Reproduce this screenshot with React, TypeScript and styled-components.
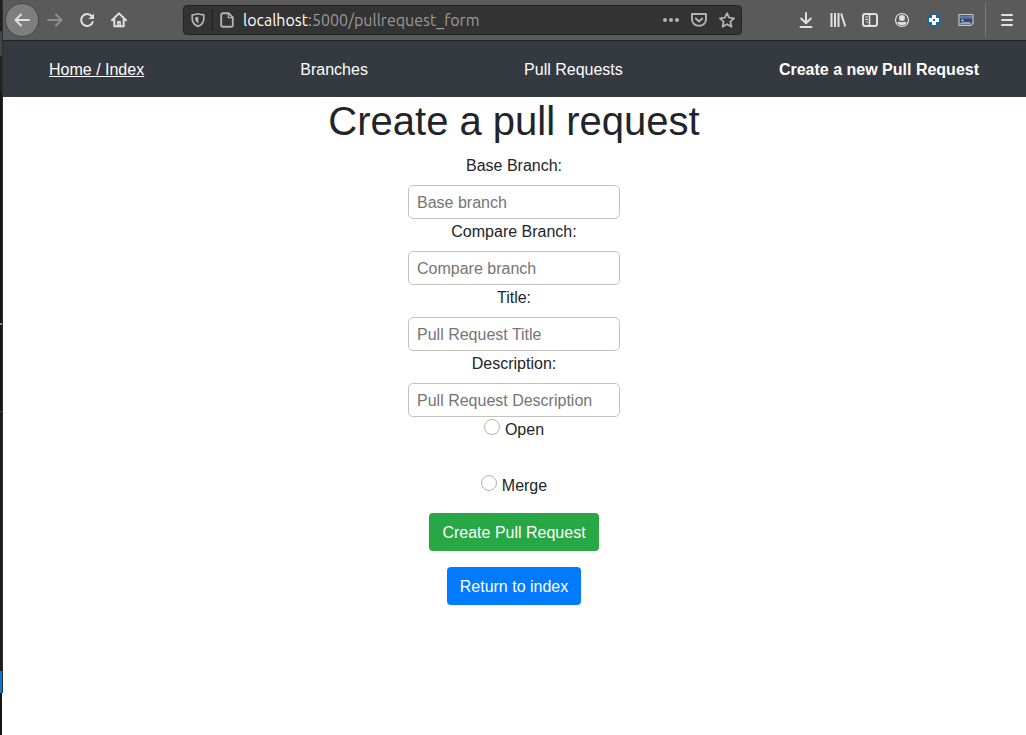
import React from "react";
import styled, { createGlobalStyle } from "styled-components";

const GlobalStyle = createGlobalStyle`
  *, *::before, *::after { box-sizing: border-box; }
  body {
    margin: 0;
    background: #fff;
    color: #212529;
    font-family: "Liberation Sans", Arial, sans-serif;
    font-size: 16px;
    line-height: 24px;
  }
`;

const Screen = styled.div`
  display: flex;
  min-height: 100vh;
`;

const DesktopEdge = styled.div`
  display: flex;
  flex-direction: column;
  flex: none;
  width: 3px;
`;

const EdgePart = styled.div<{ $size?: number; $color: string; $line?: string }>`
  flex: ${(p) => (p.$size ? `0 0 ${p.$size}px` : "1 0 0")};
  background: ${(p) => p.$color};
  border-right: 1px solid ${(p) => p.$line ?? "#2e2e2c"};
`;

const Window = styled.div`
  flex: 1;
  min-width: 0;
`;

const Toolbar = styled.header`
  display: flex;
  align-items: center;
  justify-content: space-between;
  height: 41px;
  padding: 0 3px 0 2px;
  background: #5a5a5a;
  border-bottom: 1px solid #232323;
`;

const ToolGroup = styled.div`
  display: flex;
  align-items: center;
`;

const ToolButton = styled.button<{ $round?: boolean }>`
  display: flex;
  align-items: center;
  justify-content: center;
  width: ${(p) => (p.$round ? 34 : 32)}px;
  height: ${(p) => (p.$round ? 34 : 32)}px;
  padding: 0;
  border: ${(p) => (p.$round ? "1px solid #454545" : "none")};
  border-radius: ${(p) => (p.$round ? "50%" : "3px")};
  background: ${(p) => (p.$round ? "#7e7e7e" : "none")};
`;

const Divider = styled.span`
  width: 1px;
  height: 34px;
  margin: 0 5px 0 3px;
  background: #7d7d7d;
`;

const AddressBar = styled.div`
  display: flex;
  align-items: center;
  width: 559px;
  height: 30px;
  background: #333;
  border: 1px solid #242424;
  border-radius: 4px;
`;

const AddressButton = styled.button`
  display: flex;
  align-items: center;
  justify-content: center;
  width: 28px;
  height: 26px;
  padding: 0;
  border: none;
  background: none;
`;

const AddressDivider = styled.span`
  width: 1px;
  height: 22px;
  background: #1f1f1f;
`;

const Address = styled.div`
  flex: 1;
  margin-left: 2px;
  color: #9a9a9a;
  font: 16px/20px Ubuntu, "Noto Sans", sans-serif;
`;

const Host = styled.span`
  color: #fff;
`;

const Nav = styled.nav`
  padding: 17px 47px 15px 46px;
  background: #343a40;
`;

const NavList = styled.ul`
  display: flex;
  justify-content: space-between;
  margin: 0;
  padding: 0;
  list-style: none;
`;

const NavLink = styled.a<{ $underlined?: boolean; $bold?: boolean }>`
  color: #fff;
  font-weight: ${(p) => (p.$bold ? 700 : 400)};
  text-decoration: ${(p) => (p.$underlined ? "underline" : "none")};
`;

const Form = styled.form`
  display: flex;
  flex-direction: column;
  align-items: center;
  padding-right: 1px;
`;

const Title = styled.h1`
  margin: 0 0 8px;
  font-size: 40px;
  font-weight: 400;
  line-height: 48px;
  text-align: center;
`;

const Label = styled.label`
  padding: 1px 0 7px;
`;

const TextInput = styled.input`
  width: 212px;
  height: 34px;
  padding: 2px 8px 0;
  border: 1px solid #c6c1bc;
  border-radius: 5px;
  background: #fff;
  color: #212529;
  font: inherit;
  &::placeholder { color: #757575; opacity: 1; }
`;

const Choices = styled.div`
  display: flex;
  flex-direction: column;
  align-items: center;
  gap: 31px;
  margin-bottom: 15px;
`;

const Choice = styled.label`
  display: flex;
  align-items: flex-start;
  gap: 5px;
  line-height: 25px;
  padding-top: 0;
`;

const ChoiceText = styled.span`
  padding-top: 1px;
  line-height: 24px;
`;

const Radio = styled.input.attrs({ type: "radio" })`
  appearance: none;
  width: 16px;
  height: 16px;
  margin: 2px 0 0;
  border: 1px solid #b8b2ab;
  border-radius: 50%;
  background: #fff;
  &:checked { border: 5px solid #007bff; }
`;

const Action = styled.button<{ $color: string }>`
  height: 38px;
  margin-bottom: 16px;
  padding: 2px 13px 0;
  border: none;
  border-radius: 4px;
  background: ${(p) => p.$color};
  color: #fff;
  font: inherit;
`;

type IconProps = { color?: string; children: React.ReactNode; filled?: boolean };

const Icon = ({ color = "#e0e0e0", filled, children }: IconProps) => (
  <svg
    width="16"
    height="16"
    viewBox="0 0 16 16"
    fill={filled ? color : "none"}
    stroke={filled ? "none" : color}
    strokeWidth="2"
    strokeLinecap="round"
    strokeLinejoin="round"
    aria-hidden="true"
  >
    {children}
  </svg>
);

const fields = [
  { id: "base", label: "Base Branch:", placeholder: "Base branch" },
  { id: "compare", label: "Compare Branch:", placeholder: "Compare branch" },
  { id: "title", label: "Title:", placeholder: "Pull Request Title" },
  { id: "description", label: "Description:", placeholder: "Pull Request Description" },
];

const muted = "#b4b4b4";

export default function App() {
  return (
    <Screen>
      <GlobalStyle />
      <DesktopEdge>
        <EdgePart $size={31} $color="#20201e" />
        <EdgePart $size={25} $color="#454541" />
        <EdgePart $size={35} $color="#25251f" />
        <EdgePart $size={232} $color="#161616" />
        <EdgePart $size={2} $color="#8a8a8a" />
        <EdgePart $size={86} $color="#161616" />
        <EdgePart $size={1} $color="#444" />
        <EdgePart $size={259} $color="#1c1c1c" />
        <EdgePart $size={22} $color="#0a78cc" />
        <EdgePart $color="#141618" $line="#fff" />
      </DesktopEdge>
      <Window>
        <Toolbar>
          <ToolGroup>
            <ToolButton $round aria-label="Back">
              <Icon><path d="M15 8H2M7 2.5L1.5 8L7 13.5" /></Icon>
            </ToolButton>
            <ToolButton aria-label="Forward">
              <Icon color="#8e8e8e"><path d="M1 8h13M9 2.5L14.5 8L9 13.5" /></Icon>
            </ToolButton>
            <ToolButton aria-label="Reload">
              <Icon>
                <path d="M12.8 4.2A6 6 0 1 0 13.8 10" />
                <path d="M15 1.4V7H9.4Z" fill="#e0e0e0" stroke="none" />
              </Icon>
            </ToolButton>
            <ToolButton aria-label="Home">
              <Icon>
                <path d="M1 8.2L8 1.4L15 8.2M3.3 7v7.2h9.4V7" />
                <path d="M6.9 14V9.9h2.2V14" strokeWidth="1.6" />
              </Icon>
            </ToolButton>
          </ToolGroup>
          <AddressBar>
            <AddressButton aria-label="Tracking protection">
              <Icon color={muted}>
                <path d="M8 1.8C6 2.4 4.2 2.7 2.2 2.8v4c0 4 2.3 6.2 5.8 7.600c3.500-1.400 5.800-3.600 5.800-7.600v-4C11.800 2.700 10 2.400 8 1.800Z" strokeWidth="1.700" />
                <path d="M8.400 4.700V11.600C6.300 10.400 5.200 9 5.200 6.600V5.300Z" fill={muted} stroke="none" />
              </Icon>
            </AddressButton>
            <AddressDivider />
            <AddressButton aria-label="Site information">
              <Icon color={muted}>
                <path d="M4 1.2H9.6L13.8 5.4V13a1.8 1.8 0 0 1-1.8 1.8H4A1.8 1.8 0 0 1 2.2 13V3A1.8 1.8 0 0 1 4 1.2Z" strokeWidth="1.9" />
                <path d="M9.4 1.5V5.7H13.6" strokeWidth="1.2" />
              </Icon>
            </AddressButton>
            <Address><Host>localhost</Host>:5000/pullrequest_form</Address>
            <AddressButton aria-label="Page actions">
              <Icon color={muted} filled>
                <circle cx="2" cy="8" r="2" /><circle cx="8" cy="8" r="2" /><circle cx="14" cy="8" r="2" />
              </Icon>
            </AddressButton>
            <AddressButton aria-label="Save to Pocket">
              <Icon color={muted}>
                <path d="M1 2H15V7.500a7 6.300 0 0 1-14 0Z" strokeWidth="1.900" />
                <path d="M4.800 6.500L8 9.500L11.200 6.500" strokeWidth="1.900" />
              </Icon>
            </AddressButton>
            <AddressButton aria-label="Bookmark this page">
              <Icon color={muted}>
                <path d="M8 1.100L10.100 5.700L15.100 6.300L11.400 9.700L12.500 14.800L8 12.200L3.500 14.800L4.600 9.700L0.900 6.300L5.900 5.700Z" strokeWidth="1.700" />
              </Icon>
            </AddressButton>
          </AddressBar>
          <ToolGroup>
            <ToolButton aria-label="Downloads">
              <Icon><path d="M8 1V11M3.2 6.5L8 11.3L12.8 6.5M2.5 15H13.5" /></Icon>
            </ToolButton>
            <ToolButton aria-label="Library">
              <Icon><path d="M1.5 1V15M5 1V15M8.5 1V15M11.2 1.5L15.2 14.500" strokeLinecap="butt" /></Icon>
            </ToolButton>
            <ToolButton aria-label="Sidebars">
              <Icon>
                <rect x="1" y="2" width="14" height="12" rx="2" />
                <path d="M7.5 2V14" strokeWidth="1.6" />
                <path d="M3 5H6M3 7.5H6M4 10H6" strokeWidth="1" strokeLinecap="butt" />
              </Icon>
            </ToolButton>
            <ToolButton aria-label="Account">
              <Icon>
                <circle cx="8" cy="8" r="6.5" strokeWidth="1.2" />
                <circle cx="8" cy="6" r="3" fill="#e0e0e0" stroke="none" />
                <path d="M3.3 10.5C5 9.2 6 10.2 8 10.2S11 9.2 12.7 10.5C11.7 12.4 10 13.3 8 13.3S4.3 12.4 3.3 10.5Z" fill="#e0e0e0" stroke="none" />
              </Icon>
            </ToolButton>
            <ToolButton aria-label="Extension">
              <Icon>
                <circle cx="8" cy="8" r="7" fill="#1b6899" stroke="none" />
                <path d="M6 3h4v3h3v4h-3v3h-4v-3h-3v-4h3Z" fill="#fff" stroke="none" />
                <rect x="7" y="7" width="2" height="2" fill="#1b6899" stroke="none" />
              </Icon>
            </ToolButton>
            <ToolButton aria-label="Screenshot">
              <Icon>
                <path d="M1 2.500H15V11L12.500 13.500H1Z" fill="#34496b" stroke="#c8c8c4" strokeWidth="1.200" />
                <path d="M2 3.500H14V6.500H2Z" fill="#5f7ba8" stroke="none" />
                <path d="M2 12.500V11L6 10H13L11.500 12.500Z" fill="#a3a9ae" stroke="none" />
                <circle cx="4.500" cy="8.500" r="1" fill="#e8e8e8" stroke="none" />
              </Icon>
            </ToolButton>
            <Divider />
            <ToolButton aria-label="Open menu">
              <Icon><path d="M3 3H13M3 8H13M3 13H13" /></Icon>
            </ToolButton>
          </ToolGroup>
        </Toolbar>
        <Nav>
          <NavList>
            <li><NavLink href="#index" $underlined>Home / Index</NavLink></li>
            <li><NavLink href="#branches">Branches</NavLink></li>
            <li><NavLink href="#pulls">Pull Requests</NavLink></li>
            <li><NavLink href="#new" $bold>Create a new Pull Request</NavLink></li>
          </NavList>
        </Nav>
        <Form onSubmit={(e) => e.preventDefault()}>
          <Title>Create a pull request</Title>
          {fields.map((f) => (
            <React.Fragment key={f.id}>
              <Label htmlFor={f.id}>{f.label}</Label>
              <TextInput id={f.id} name={f.id} placeholder={f.placeholder} />
            </React.Fragment>
          ))}
          <Choices>
            <Choice><Radio name="action" value="open" /><ChoiceText>Open</ChoiceText></Choice>
            <Choice><Radio name="action" value="merge" /><ChoiceText>Merge</ChoiceText></Choice>
          </Choices>
          <Action type="submit" $color="#28a745">Create Pull Request</Action>
          <Action type="button" $color="#007bff">Return to index</Action>
        </Form>
      </Window>
    </Screen>
  );
}
